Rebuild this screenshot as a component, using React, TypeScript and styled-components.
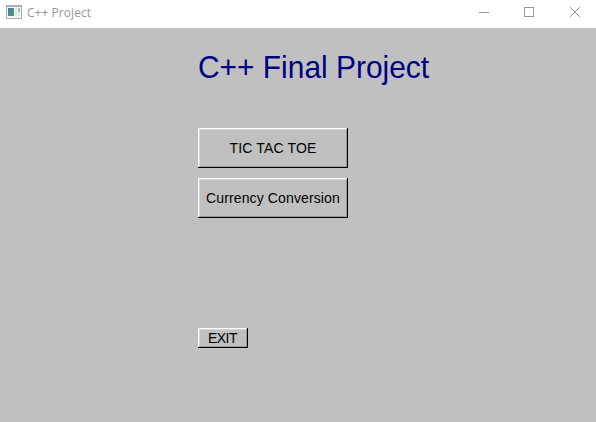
import React from "react";
import styled, { createGlobalStyle } from "styled-components";

const GlobalStyle = createGlobalStyle`
  body { margin: 0; }
  * { box-sizing: border-box; }
`;
const Window = styled.div`
  width: 596px; height: 422px; background: #c0c0c0; overflow: hidden;
  display: flex; flex-direction: column;
  font-family: "Liberation Sans", Arial, sans-serif;
`;
const TitleBar = styled.header`
  height: 28px; flex: none; background: #fff; display: flex; align-items: flex-start;
`;
const AppIcon = styled.svg`margin: 5px 0 0 6px; flex: none;`;
const Caption = styled.span`
  margin: 5px 0 0 5px; font: 12px/16px "Open Sans", sans-serif; color: #999;
  letter-spacing: 0.05px; flex: 1; white-space: nowrap;
`;
const WindowButton = styled.button`
  width: 46px; height: 28px; border: 0; padding: 0; background: none; flex: none;
  svg { display: block; }
`;
const Canvas = styled.main`
  flex: 1; display: flex; flex-direction: column; align-items: flex-start;
  padding-left: 198px;
`;
const Heading = styled.h1`
  margin: 22px 0 0; height: 36px; font-size: 30px; line-height: 36px; font-weight: 400;
  color: #000080; white-space: nowrap;
  transform: scale(0.997, 1.07); transform-origin: 0 28px;
`;
const Menu = styled.nav`
  margin-top: 42px; display: flex; flex-direction: column; gap: 10px;
`;
const BevelButton = styled.button<{ $small?: boolean; $tracking?: number }>`
  width: ${p => (p.$small ? 50 : 150)}px; height: ${p => (p.$small ? 20 : 40)}px;
  padding: ${p => (p.$small ? "0 1px 0 0" : "0")}; border: 0; background: #c0c0c0; color: #000;
  box-shadow: inset -1px -1px #000, inset 1px 1px #fff, inset -2px -2px #989898, inset 2px 2px #d6d6d6;
  font: 14px/16px "Liberation Sans", Arial, sans-serif; white-space: nowrap;
  letter-spacing: ${p => p.$tracking ?? 0}px;
`;
const Footer = styled.div`margin-top: 110px; display: flex;`;

export default function App() {
  return (
    <Window>
      <GlobalStyle />
      <TitleBar>
        <AppIcon width="16" height="14" shapeRendering="crispEdges">
          <defs>
            <linearGradient id="pane" x1="0" y1="0" x2="1" y2="1">
              <stop offset="0" stopColor="#4778a8" />
              <stop offset="1" stopColor="#4b9c78" />
            </linearGradient>
          </defs>
          <rect width="16" height="14" fill="#a9afb4" />
          <rect x="1" y="2" width="14" height="11" fill="#f6f6f6" />
          <rect x="2" y="3" width="6" height="8" fill="url(#pane)" />
          <rect x="9" y="3" width="2" height="8" fill="#e0e4e6" />
          <rect x="12" y="3" width="2" height="4" fill="#9fb8b0" />
          <rect x="12" y="7" width="2" height="4" fill="#e0e4e6" />
        </AppIcon>
        <Caption>C++ Project</Caption>
        <WindowButton aria-label="Minimize">
          <svg width="46" height="28"><path d="M21 12.5h10" stroke="#999" /></svg>
        </WindowButton>
        <WindowButton aria-label="Maximize">
          <svg width="46" height="28"><rect x="20.5" y="7.5" width="9" height="9" fill="none" stroke="#999" /></svg>
        </WindowButton>
        <WindowButton aria-label="Close">
          <svg width="46" height="28"><path d="M20 7l10 10M30 7l-10 10" stroke="#999" /></svg>
        </WindowButton>
      </TitleBar>
      <Canvas>
        <Heading>C++ Final Project</Heading>
        <Menu>
          <BevelButton $tracking={0.15}>TIC TAC TOE</BevelButton>
          <BevelButton $tracking={0.12}>Currency Conversion</BevelButton>
        </Menu>
        <Footer><BevelButton $small $tracking={-0.5}>EXIT</BevelButton></Footer>
      </Canvas>
    </Window>
  );
}
